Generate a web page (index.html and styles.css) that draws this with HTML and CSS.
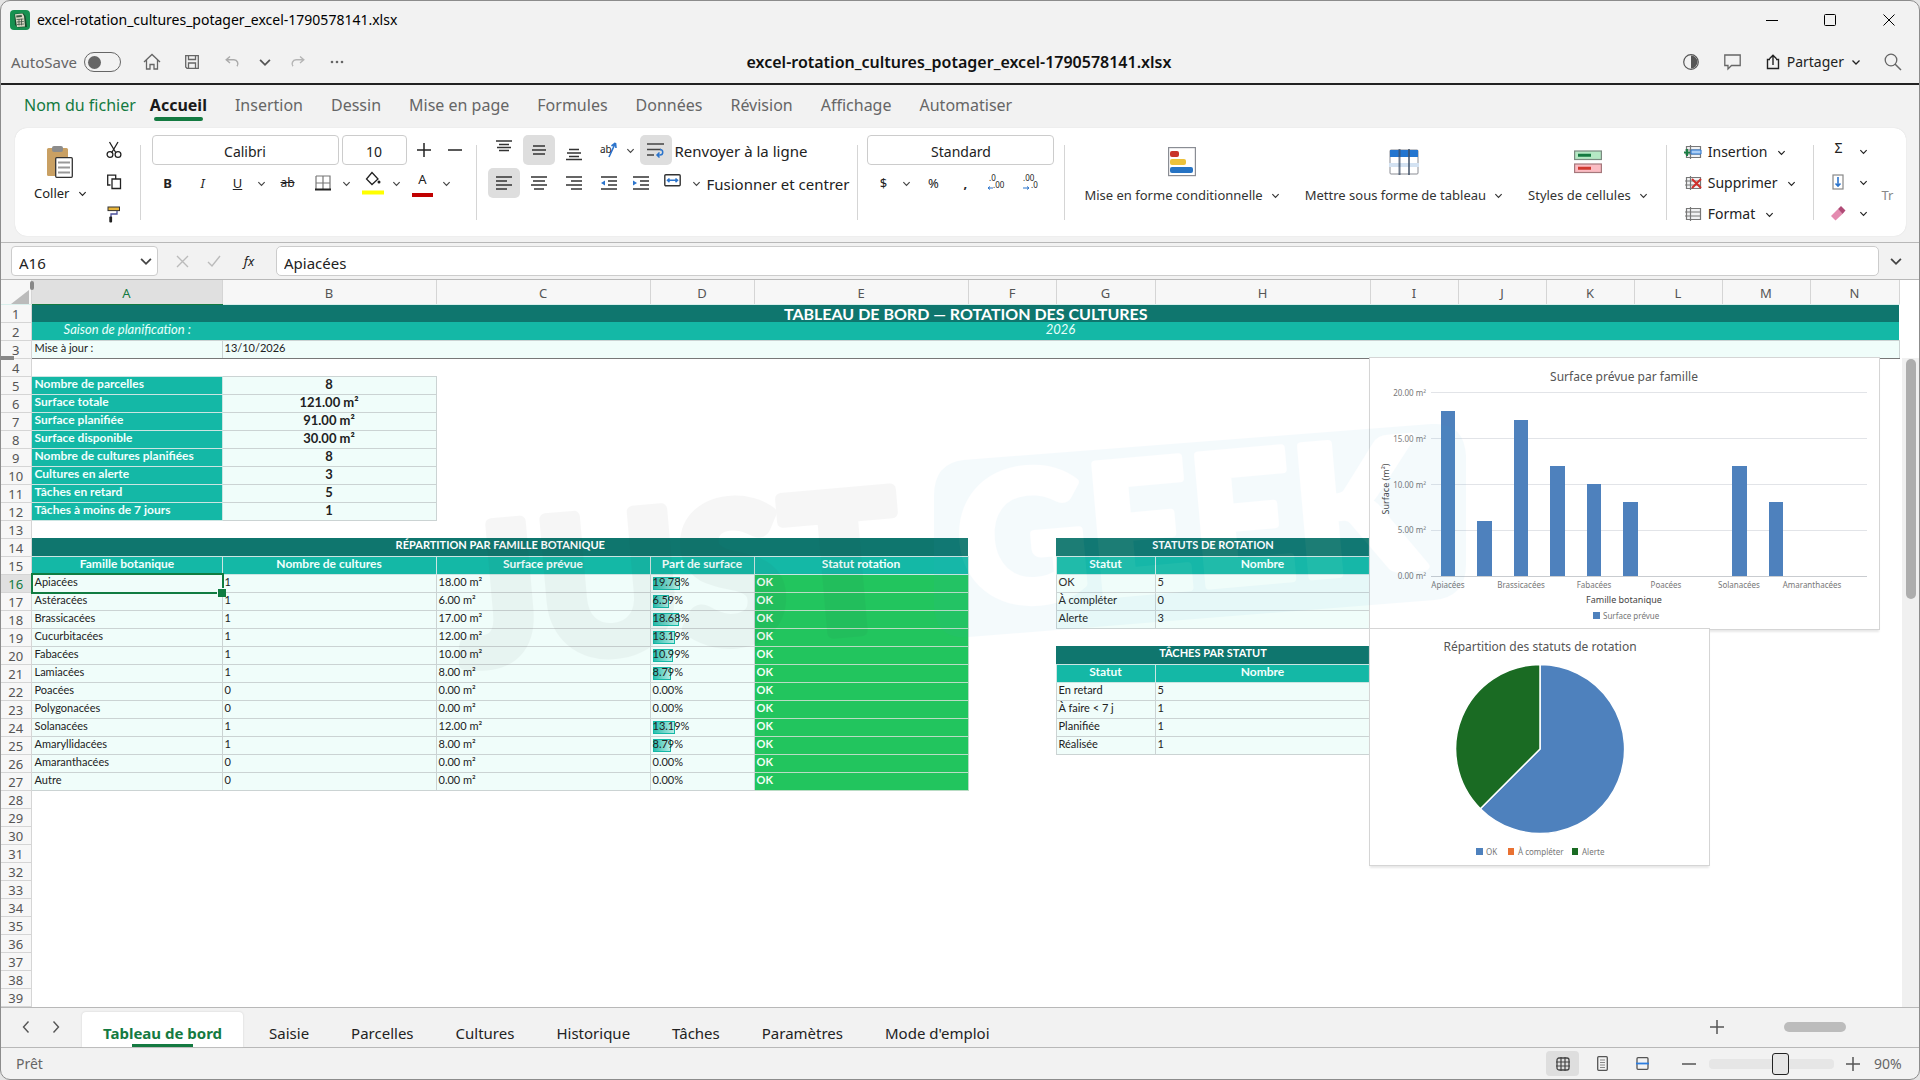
FILE: index.html
```html
<!DOCTYPE html>
<html lang="fr">
<head>
<meta charset="utf-8">
<meta name="viewport" content="width=device-width, initial-scale=1">
<title>excel-rotation_cultures_potager_excel-1790578141.xlsx</title>
<link rel="stylesheet" href="styles.css">
</head>
<body>
<svg class="defs" width="0" height="0" aria-hidden="true">
  <symbol id="chev" viewBox="0 0 10 10"><path d="M1.500 3.500 5 7l3.500-3.500" fill="none" stroke="currentColor" stroke-width="1.300"/></symbol>
  <symbol id="plus" viewBox="0 0 14 14"><path d="M7 0v14M0 7h14" stroke="currentColor" stroke-width="1.500"/></symbol>
  <symbol id="minus" viewBox="0 0 14 14"><path d="M0 7h14" stroke="currentColor" stroke-width="1.500"/></symbol>
  <symbol id="grid-rows" viewBox="0 0 18 14"><path d="M2.500 1.500h14v11h-14zM2.500 5h14M2.500 9h14M6.500 0v14M1 5h3M1 9h3" fill="#f1f2f3" stroke="#777" stroke-width="1.200"/></symbol>
</svg>
<div class="window">
  <header class="titlebar">
    <svg class="logo" viewBox="0 0 20 20"><rect width="20" height="20" rx="4" fill="#179150"/><path d="M4.500 4 13 3l2.500 3L17 17l-9 .5L5 15z" fill="#174c2d"/><path d="M5 4.200 12.500 3.500 14 6l1 10.500-8 .5z" fill="#d9d8c4"/><path d="m6.200 5.500 5.500-.5.200 2-5.500.5z" fill="#3a5a42"/><path d="M6.500 9.500l7-.5M6.800 12l7-.5M7 14.500l7-.5M9 9v6.500M11.500 8.800v6.500" stroke="#3f5545" stroke-width=".8"/></svg>
    <span class="file">excel-rotation_cultures_potager_excel-1790578141.xlsx</span>
    <div class="winctl">
      <button aria-label="Réduire"><svg width="12" height="12" viewBox="0 0 12 12"><path d="M0 6.500h12" stroke="#000"/></svg></button>
      <button aria-label="Agrandir"><svg width="12" height="12" viewBox="0 0 12 12"><rect x=".5" y=".5" width="11" height="11" rx="1" fill="none" stroke="#000"/></svg></button>
      <button aria-label="Fermer"><svg width="12" height="12" viewBox="0 0 12 12"><path d="m.5.5 11 11M11.500.5l-11 11" stroke="#000"/></svg></button>
    </div>
  </header>
  <div class="quickbar">
    <div class="quick">
      <label for="autosave">AutoSave</label><input id="autosave" class="switch" type="checkbox">
      <button class="q1" aria-label="Accueil"><svg width="18" height="18" viewBox="0 0 18 18"><path d="M1 9 9 1.500 17 9M3.500 7v9H7v-4.500h4V16h3.500V7" fill="none" stroke="#666" stroke-width="1.300"/></svg></button>
      <button class="q1" aria-label="Enregistrer"><svg width="14" height="14" viewBox="0 0 14 14"><path d="M.7.7h12.600v12.600H2L.7 12zM3.500.7v3.800h7V.7M3.500 13V8h7v5" fill="none" stroke="#666" stroke-width="1.300"/></svg></button>
      <button class="q1" aria-label="Annuler"><svg width="15" height="14" viewBox="0 0 15 14"><path d="M5 1.500 1.200 4.800 5 8M1.500 4.800H9a4 4 0 0 1 3 6.500" fill="none" stroke="#aaa" stroke-width="1.400"/></svg></button>
      <button class="q2" aria-label="Historique d'annulation"><svg width="14" height="14"><use href="#chev"/></svg></button>
      <button class="q1" aria-label="Rétablir"><svg width="15" height="14" viewBox="0 0 15 14"><path d="M10 1.500 13.800 4.800 10 8M13.500 4.800H6a4 4 0 0 0-3 6.500" fill="none" stroke="#b5b5b5" stroke-width="1.400"/></svg></button>
      <button class="q1" aria-label="Plus"><svg width="14" height="4" viewBox="0 0 14 4"><circle cx="2" cy="2" r="1.300" fill="#666"/><circle cx="7" cy="2" r="1.300" fill="#666"/><circle cx="12" cy="2" r="1.300" fill="#666"/></svg></button>
    </div>
    <strong class="doctitle">excel-rotation_cultures_potager_excel-1790578141.xlsx</strong>
    <div class="share">
      <button class="q1" aria-label="Contraste"><svg width="16" height="16" viewBox="0 0 16 16"><circle cx="8" cy="8" r="7.300" fill="none" stroke="#555" stroke-width="1.200"/><path d="M8 1.500a6.500 6.500 0 0 1 0 13z" fill="#555"/></svg></button>
      <button class="q1" aria-label="Commentaires"><svg width="17" height="16" viewBox="0 0 17 16"><path d="M.8 1h15.400v10.500H7.500L4 15v-3.500H.8z" fill="none" stroke="#666" stroke-width="1.300"/></svg></button>
      <button class="sharebtn"><svg width="14" height="16" viewBox="0 0 14 16"><path d="M4 5.500H1.500v9h11v-9H10M7 11V1.500M3.500 4.800 7 1.300l3.500 3.500" fill="none" stroke="#222" stroke-width="1.400"/></svg>Partager<svg width="10" height="10"><use href="#chev"/></svg></button>
      <button class="q1" aria-label="Rechercher"><svg width="18" height="18" viewBox="0 0 18 18"><circle cx="7" cy="7" r="5.800" fill="none" stroke="#666" stroke-width="1.300"/><path d="m11 11 6 6" stroke="#666" stroke-width="1.500"/></svg></button>
    </div>
  </div>
  <nav class="tabs">
    <a class="filetab" href="#fichier">Nom du fichier</a>
    <a class="active" href="#accueil" aria-current="page">Accueil</a>
    <a href="#insertion">Insertion</a>
    <a href="#dessin">Dessin</a>
    <a href="#mise-en-page">Mise en page</a>
    <a href="#formules">Formules</a>
    <a href="#donnees">Données</a>
    <a href="#revision">Révision</a>
    <a href="#affichage">Affichage</a>
    <a href="#automatiser">Automatiser</a>
  </nav>
  <div class="ribbon">
    <section class="group clip">
      <button class="big paste"><svg width="26" height="32" viewBox="0 0 26 32"><rect y="2" width="21" height="28" rx="1.500" fill="#c9a063"/><rect x="5" width="11" height="6" rx="2" fill="#8c8c8c"/><rect x="8.700" y="11.700" width="16.600" height="19.600" rx="1" fill="#fff" stroke="#333" stroke-width="1.300"/><path d="M11 16.500h12M11 21.500h12M11 26.500h12" stroke="#999" stroke-width="2"/></svg><span>Coller<svg width="9" height="9"><use href="#chev"/></svg></span></button>
      <div class="stack">
        <button aria-label="Couper"><svg width="16" height="18" viewBox="0 0 16 18"><path d="M3.500 1 10 12M12 1 5.500 12" stroke="#222" stroke-width="1.300"/><circle cx="4" cy="13.500" r="2.900" fill="none" stroke="#222" stroke-width="1.300"/><circle cx="12" cy="13.500" r="2.900" fill="none" stroke="#222" stroke-width="1.300"/></svg></button>
        <button aria-label="Copier"><svg width="16" height="16" viewBox="0 0 16 16"><path d="M4.500 11H1.700V1.200h8v3M6 5h8.500v9.500H6z" fill="none" stroke="#222" stroke-width="1.300"/></svg></button>
        <button aria-label="Reproduire la mise en forme"><svg width="14" height="17" viewBox="0 0 14 17"><rect x="1" y="1" width="11.500" height="3.600" fill="#e8b53a" stroke="#333" stroke-width="1"/><path d="M10 5v3H4v4" fill="none" stroke="#4a4f9a" stroke-width="1.300"/><rect x="2.300" y="10.500" width="2.800" height="6" rx="1" fill="#222"/></svg></button>
      </div>
    </section>
    <section class="group font">
      <div class="line"><input class="box wide" aria-label="Police" value="Calibri"><input class="box size" aria-label="Taille" value="10"><button class="t pm" aria-label="Agrandir la police"><svg width="14" height="14"><use href="#plus"/></svg></button><button class="t pm" aria-label="Réduire la police"><svg width="14" height="14"><use href="#minus"/></svg></button></div>
      <div class="line">
        <button class="t"><b>B</b></button>
        <button class="t"><i>I</i></button>
        <span class="pair"><button class="t"><u>U</u></button><button class="c" aria-label="Options de soulignement"><svg width="9" height="9"><use href="#chev"/></svg></button></span>
        <button class="t"><s>ab</s></button>
        <span class="pair"><button class="t" aria-label="Bordures"><svg width="16" height="16" viewBox="0 0 16 16"><path d="M1 1h14v14M1 1v14M8 1v14M1 8h14" fill="none" stroke="#777" stroke-width="1.200"/><path d="M0 14.500h16" stroke="#222" stroke-width="2"/></svg></button><button class="c" aria-label="Options de bordures"><svg width="9" height="9"><use href="#chev"/></svg></button></span>
        <span class="pair"><button class="t" aria-label="Remplissage"><svg width="22" height="24" viewBox="0 0 22 24"><path d="M10 1.500 4.500 8 10 13.500 16 8z" fill="none" stroke="#222" stroke-width="1.300"/><circle cx="17" cy="11" r="1.500" fill="#222"/><path d="M0 21.500h22" stroke="#ff0" stroke-width="4"/></svg></button><button class="c" aria-label="Couleurs de remplissage"><svg width="9" height="9"><use href="#chev"/></svg></button></span>
        <span class="pair"><button class="t fontcolor">A</button><button class="c" aria-label="Couleurs de police"><svg width="9" height="9"><use href="#chev"/></svg></button></span>
      </div>
    </section>
    <section class="group align">
      <div class="line">
        <button class="t" aria-label="Aligner en haut"><svg width="16" height="24" viewBox="0 0 16 24"><path d="M0 3h16M3 6.500h10M1 9.500h14M3 12.500h10" stroke="#333" stroke-width="1.300"/></svg></button>
        <button class="t on" aria-label="Aligner au centre"><svg width="16" height="16" viewBox="0 0 16 16"><path d="M2 4h12M1 8h14M2 12h12" stroke="#333" stroke-width="1.600"/></svg></button>
        <button class="t" aria-label="Aligner en bas"><svg width="16" height="24" viewBox="0 0 16 24"><path d="M3 11.500h10M1 15h14M3 18.500h10M0 21.500h16" stroke="#333" stroke-width="1.300"/></svg></button>
        <span class="pair"><button class="t" aria-label="Orientation"><svg width="18" height="18" viewBox="0 0 18 18"><path d="m9 16 6-13M15.500 2l-4 3M15.500 2l.5 5" stroke="#2b74cc" stroke-width="1.600"/><text x="0" y="12" font-size="10" fill="#222">ab</text></svg></button><button class="c slim" aria-label="Options d'orientation"><svg width="9" height="9"><use href="#chev"/></svg></button></span>
        <button class="t on" aria-label="Renvoyer à la ligne"><svg width="18" height="16" viewBox="0 0 18 16"><path d="M0 2h17M0 7.500h14M0 13h7" stroke="#444" stroke-width="1.600"/><path d="M13 7.500a2.700 2.700 0 0 1 0 5.500h-3m2.500-2.500L10 13l2.500 2.500" fill="none" stroke="#2b74cc" stroke-width="1.500"/></svg></button>
        <span class="txt">Renvoyer à la ligne</span>
      </div>
      <div class="line">
        <button class="t on" aria-label="Aligner à gauche"><svg width="16" height="14" viewBox="0 0 16 14"><path d="M0 1h16M0 5h11M0 9h16M0 13h11" stroke="#333" stroke-width="1.500"/></svg></button>
        <button class="t" aria-label="Centrer"><svg width="16" height="14" viewBox="0 0 16 14"><path d="M0 1h16M2 5h12M0 9h16M3 13h10" stroke="#333" stroke-width="1.500"/></svg></button>
        <button class="t" aria-label="Aligner à droite"><svg width="16" height="14" viewBox="0 0 16 14"><path d="M0 1h16M5 5h11M0 9h16M5 13h11" stroke="#333" stroke-width="1.500"/></svg></button>
        <span class="pair"><button class="t" aria-label="Diminuer le retrait"><svg width="16" height="14" viewBox="0 0 16 14"><path d="M0 1h16M7 5h9M7 9h9M0 13h16" stroke="#333" stroke-width="1.500"/><path d="M0 7l4-2.500v5z" fill="#2b74cc"/></svg></button><button class="t" aria-label="Augmenter le retrait"><svg width="16" height="14" viewBox="0 0 16 14"><path d="M0 1h16M7 5h9M7 9h9M0 13h16" stroke="#333" stroke-width="1.500"/><path d="M4 7 0 4.500v5z" fill="#2b74cc"/></svg></button><button class="t" aria-label="Fusionner et centrer"><svg width="18" height="18" viewBox="0 0 18 18"><rect x=".8" y=".8" width="15.400" height="11" rx="1" fill="none" stroke="#333" stroke-width="1.400"/><path d="M3.500 6.300h10M5.500 4.500l-2 1.800 2 1.800M11.500 4.500l2 1.800-2 1.800" fill="none" stroke="#2b74cc" stroke-width="1.500"/></svg></button><button class="c" aria-label="Options de fusion"><svg width="9" height="9"><use href="#chev"/></svg></button></span>
        <span class="txt">Fusionner et centrer</span>
      </div>
    </section>
    <section class="group num">
      <div class="line"><input class="box wide" aria-label="Format de nombre" value="Standard"></div>
      <div class="line">
        <span class="pair"><button class="t">$</button><button class="c" aria-label="Devises"><svg width="9" height="9"><use href="#chev"/></svg></button></span>
        <span class="pair"><button class="t">%</button><button class="t"><b>,</b></button><button class="t" aria-label="Ajouter une décimale"><svg width="20" height="20" viewBox="0 0 20 20"><text x="2" y="8" font-size="8" fill="#222">.0</text><text x="6" y="15" font-size="8" fill="#222">.00</text><path d="M6 15H1m2-1.500L1 15l2 1.500" fill="none" stroke="#2b74cc"/></svg></button></span>
        <button class="t" aria-label="Réduire les décimales"><svg width="20" height="20" viewBox="0 0 20 20"><text x="1" y="8" font-size="8" fill="#222">.00</text><text x="9" y="15" font-size="8" fill="#222">.0</text><path d="M1 15h6m-2-1.500L7 15l-2 1.500" fill="none" stroke="#2b74cc"/></svg></button>
      </div>
    </section>
    <section class="group styles">
      <button class="big"><svg width="28" height="30" viewBox="0 0 28 30"><rect x=".6" y=".6" width="26.800" height="28" fill="#fff" stroke="#8a8d94" stroke-width="1.200"/><rect x="2" y="4" width="9" height="6" rx="2" fill="#c9342b"/><rect x="2" y="12" width="16" height="6" rx="2" fill="#ecc13b"/><rect x="2" y="20" width="23" height="6" rx="2" fill="#2673c4"/></svg><span>Mise en forme conditionnelle<svg width="9" height="9"><use href="#chev"/></svg></span></button>
      <button class="big"><svg width="30" height="30" viewBox="0 0 30 30"><rect x="1" y="3" width="28" height="24" rx="1" fill="#fff" stroke="#8a8d94"/><rect x="1" y="3" width="28" height="7" fill="#2375cf"/><rect x="0" y="16" width="30" height="4" fill="#d3e2f2"/><path d="M10.500 2v26M20 2v26" stroke="#3d4f66" stroke-opacity=".75" stroke-width="2"/></svg><span>Mettre sous forme de tableau<svg width="9" height="9"><use href="#chev"/></svg></span></button>
      <button class="big"><svg width="28" height="30" viewBox="0 0 28 30"><rect x=".6" y="4" width="26.800" height="8.500" fill="#b5e8c4" stroke="#7a8a80" stroke-width="1.200"/><path d="M4 8.300h13" stroke="#147a41" stroke-width="3"/><rect x=".6" y="17" width="26.800" height="8.500" fill="#fbbcc3" stroke="#a5787c" stroke-width="1.200"/><path d="M4 21.300h13" stroke="#d0392f" stroke-width="3"/></svg><span>Styles de cellules<svg width="9" height="9"><use href="#chev"/></svg></span></button>
    </section>
    <section class="group cells">
      <button><svg width="18" height="14"><use href="#grid-rows"/><path d="M7 5h10v4H7z" fill="#a9cdf5" stroke="#2b74cc"/><path d="M3 4v7M0 7.500h6" stroke="#1b7d45" stroke-width="2"/></svg>Insertion<svg width="9" height="9"><use href="#chev"/></svg></button>
      <button><svg width="18" height="14"><use href="#grid-rows"/><path d="m8 3 9 9M17 3l-9 9" stroke="#d0302b" stroke-width="2"/></svg>Supprimer<svg width="9" height="9"><use href="#chev"/></svg></button>
      <button><svg width="18" height="14"><use href="#grid-rows"/></svg>Format<svg width="9" height="9"><use href="#chev"/></svg></button>
    </section>
    <section class="group edit">
      <button aria-label="Somme automatique"><span class="sigma">Σ</span><svg width="9" height="9"><use href="#chev"/></svg></button>
      <button aria-label="Remplissage"><svg width="12" height="16" viewBox="0 0 12 16"><rect x="1" y="1" width="10" height="14" fill="none" stroke="#888" stroke-width="1.200"/><path d="M6 3v9M3.500 9.500 6 12l2.500-2.500" fill="none" stroke="#2b74cc" stroke-width="1.600"/></svg><svg width="9" height="9"><use href="#chev"/></svg></button>
      <button aria-label="Effacer"><svg width="16" height="16" viewBox="0 0 16 16"><path d="m1 11 7-7 4.500 5-7 6.500z" fill="#e48bb0"/><path d="m8 4 3-3 4.500 4.500-3 3.500z" fill="#b04a76"/></svg><svg width="9" height="9"><use href="#chev"/></svg></button>
    </section>
    <button class="more">Tr</button>
  </div>
  <div class="formula">
    <div class="namebox"><input aria-label="Zone Nom" value="A16"><button aria-label="Liste des noms"><svg width="14" height="14"><use href="#chev"/></svg></button></div>
    <button class="fbtn" aria-label="Annuler la saisie"><svg width="13" height="13" viewBox="0 0 13 13"><path d="m1 1 11 11M12 1 1 12" stroke="#bbb" stroke-width="1.400"/></svg></button>
    <button class="fbtn" aria-label="Valider"><svg width="14" height="12" viewBox="0 0 14 12"><path d="m1 7 4 4 8-10" fill="none" stroke="#bbb" stroke-width="1.400"/></svg></button>
    <button class="fbtn fx"><i>fx</i></button>
    <input class="fx-input" aria-label="Barre de formule" value="Apiacées">
    <button class="expand" aria-label="Développer"><svg width="14" height="14"><use href="#chev"/></svg></button>
  </div>
  <main class="sheet">
    <table class="grid">
      <colgroup><col class="w-h"><col class="w-a"><col class="w-b"><col class="w-b"><col class="w-d"><col class="w-b"><col class="w-i"><col class="w-g"><col class="w-k"><col class="w-i"><col class="w-i"><col class="w-i"><col class="w-i"><col class="w-i"><col class="w-n"></colgroup>
      <thead><tr><th class="corner"><svg width="18" height="15" viewBox="0 0 18 15"><path d="M0 15 18 1v14z" fill="#bbb"/></svg></th><th class="cur">A</th><th>B</th><th>C</th><th>D</th><th>E</th><th>F</th><th>G</th><th>H</th><th>I</th><th>J</th><th>K</th><th>L</th><th>M</th><th>N</th></tr></thead>
      <tbody>
        <tr><th>1</th><td class="dk main" colspan="14">TABLEAU DE BORD — ROTATION DES CULTURES</td></tr>
        <tr><th>2</th><td class="season">Saison de planification :</td><td class="season" colspan="13">2026</td></tr>
        <tr class="frozen"><th>3</th><td class="v">Mise à jour :</td><td class="v" colspan="13">13/10/2026</td></tr>
        <tr><th>4</th><td colspan="14"></td></tr>
        <tr><th>5</th><td class="k">Nombre de parcelles</td><td class="n">8</td><td colspan="12"></td></tr>
        <tr><th>6</th><td class="k">Surface totale</td><td class="n">121.00 m²</td><td colspan="12"></td></tr>
        <tr><th>7</th><td class="k">Surface planifiée</td><td class="n">91.00 m²</td><td colspan="12"></td></tr>
        <tr><th>8</th><td class="k">Surface disponible</td><td class="n">30.00 m²</td><td colspan="12"></td></tr>
        <tr><th>9</th><td class="k">Nombre de cultures planifiées</td><td class="n">8</td><td colspan="12"></td></tr>
        <tr><th>10</th><td class="k">Cultures en alerte</td><td class="n">3</td><td colspan="12"></td></tr>
        <tr><th>11</th><td class="k">Tâches en retard</td><td class="n">5</td><td colspan="12"></td></tr>
        <tr><th>12</th><td class="k">Tâches à moins de 7 jours</td><td class="n">1</td><td colspan="12"></td></tr>
        <tr><th>13</th><td colspan="14"></td></tr>
        <tr><th>14</th><td class="dk" colspan="5">RÉPARTITION PAR FAMILLE BOTANIQUE</td><td></td><td class="dk" colspan="2">STATUTS DE ROTATION</td><td colspan="6"></td></tr>
        <tr><th>15</th><td class="k mid">Famille botanique</td><td class="k mid">Nombre de cultures</td><td class="k mid">Surface prévue</td><td class="k mid">Part de surface</td><td class="k mid">Statut rotation</td><td></td><td class="k mid">Statut</td><td class="k mid">Nombre</td><td colspan="6"></td></tr>
        <tr><th class="cur">16</th><td class="v sel">Apiacées</td><td class="v">1</td><td class="v">18.00 m²</td><td class="v bar"><span class="fill" style="width:27px"></span><span>19.78%</span></td><td class="ok">OK</td><td></td><td class="v">OK</td><td class="v">5</td><td colspan="6"></td></tr>
        <tr><th>17</th><td class="v">Astéracées</td><td class="v">1</td><td class="v">6.00 m²</td><td class="v bar"><span class="fill" style="width:16px"></span><span>6.59%</span></td><td class="ok">OK</td><td></td><td class="v">À compléter</td><td class="v">0</td><td colspan="6"></td></tr>
        <tr><th>18</th><td class="v">Brassicacées</td><td class="v">1</td><td class="v">17.00 m²</td><td class="v bar"><span class="fill" style="width:26px"></span><span>18.68%</span></td><td class="ok">OK</td><td></td><td class="v">Alerte</td><td class="v">3</td><td colspan="6"></td></tr>
        <tr><th>19</th><td class="v">Cucurbitacées</td><td class="v">1</td><td class="v">12.00 m²</td><td class="v bar"><span class="fill" style="width:22px"></span><span>13.19%</span></td><td class="ok">OK</td><td colspan="9"></td></tr>
        <tr><th>20</th><td class="v">Fabacées</td><td class="v">1</td><td class="v">10.00 m²</td><td class="v bar"><span class="fill" style="width:20px"></span><span>10.99%</span></td><td class="ok">OK</td><td></td><td class="dk" colspan="2">TÂCHES PAR STATUT</td><td colspan="6"></td></tr>
        <tr><th>21</th><td class="v">Lamiacées</td><td class="v">1</td><td class="v">8.00 m²</td><td class="v bar"><span class="fill" style="width:18px"></span><span>8.79%</span></td><td class="ok">OK</td><td></td><td class="k mid">Statut</td><td class="k mid">Nombre</td><td colspan="6"></td></tr>
        <tr><th>22</th><td class="v">Poacées</td><td class="v">0</td><td class="v">0.00 m²</td><td class="v">0.00%</td><td class="ok">OK</td><td></td><td class="v">En retard</td><td class="v">5</td><td colspan="6"></td></tr>
        <tr><th>23</th><td class="v">Polygonacées</td><td class="v">0</td><td class="v">0.00 m²</td><td class="v">0.00%</td><td class="ok">OK</td><td></td><td class="v">À faire &lt; 7 j</td><td class="v">1</td><td colspan="6"></td></tr>
        <tr><th>24</th><td class="v">Solanacées</td><td class="v">1</td><td class="v">12.00 m²</td><td class="v bar"><span class="fill" style="width:22px"></span><span>13.19%</span></td><td class="ok">OK</td><td></td><td class="v">Planifiée</td><td class="v">1</td><td colspan="6"></td></tr>
        <tr><th>25</th><td class="v">Amaryllidacées</td><td class="v">1</td><td class="v">8.00 m²</td><td class="v bar"><span class="fill" style="width:18px"></span><span>8.79%</span></td><td class="ok">OK</td><td></td><td class="v">Réalisée</td><td class="v">1</td><td colspan="6"></td></tr>
        <tr><th>26</th><td class="v">Amaranthacées</td><td class="v">0</td><td class="v">0.00 m²</td><td class="v">0.00%</td><td class="ok">OK</td><td colspan="9"></td></tr>
        <tr><th>27</th><td class="v">Autre</td><td class="v">0</td><td class="v">0.00 m²</td><td class="v">0.00%</td><td class="ok">OK</td><td colspan="9"></td></tr>
        <tr><th>28</th><td colspan="14"></td></tr>
        <tr><th>29</th><td colspan="14"></td></tr>
        <tr><th>30</th><td colspan="14"></td></tr>
        <tr><th>31</th><td colspan="14"></td></tr>
        <tr><th>32</th><td colspan="14"></td></tr>
        <tr><th>33</th><td colspan="14"></td></tr>
        <tr><th>34</th><td colspan="14"></td></tr>
        <tr><th>35</th><td colspan="14"></td></tr>
        <tr><th>36</th><td colspan="14"></td></tr>
        <tr><th>37</th><td colspan="14"></td></tr>
        <tr><th>38</th><td colspan="14"></td></tr>
        <tr><th>39</th><td colspan="14"></td></tr>
      </tbody>
    </table>
    <span class="pane-v"></span><span class="pane-h"></span>
    <svg class="chart bars" width="509" height="271" viewBox="0 0 509 271" role="img" aria-label="Surface prévue par famille">
      <text class="ct" x="254" y="23">Surface prévue par famille</text>
      <path d="M61 34.500h436M61 80.500h436M61 126.500h436M61 172.500h436" stroke="#e2e4e8"/>
      <g fill="#4e81bd"><path d="M71 53h14v165H71zM107 163h15v55h-15zM144 62h14v156h-14zM180 108h15v110h-15zM217 126h14v92h-14zM253 144h15v74h-15zM362 108h15v110h-15zM399 144h14v74h-14z"/><path d="M223 254h7v7h-7z"/></g>
      <path d="M61 218.500h436" stroke="#c9ccd0"/>
      <g class="cs end"><text x="56" y="38">20.00 m²</text><text x="56" y="84">15.00 m²</text><text x="56" y="130">10.00 m²</text><text x="56" y="175">5.00 m²</text><text x="56" y="221">0.00 m²</text></g>
      <g class="cs"><text x="78" y="230">Apiacées</text><text x="151" y="230">Brassicacées</text><text x="224" y="230">Fabacées</text><text x="296" y="230">Poacées</text><text x="369" y="230">Solanacées</text><text x="442" y="230">Amaranthacées</text></g>
      <g class="cs start"><text x="233" y="261">Surface prévue</text></g>
      <text class="ca" x="254" y="245">Famille botanique</text>
      <text class="ca" transform="translate(19 131) rotate(-90)">Surface (m²)</text>
    </svg>
    <svg class="chart pie" width="339" height="236" viewBox="0 0 339 236" role="img" aria-label="Répartition des statuts de rotation">
      <text class="ct" x="170" y="22">Répartition des statuts de rotation</text>
      <g stroke="#fff" stroke-width="1.500"><path d="M170 120V35.500a84.500 84.500 0 1 1-59.700 144.200z" fill="#4e81bd"/><path d="M170 120l-59.700 59.700A84.500 84.500 0 0 1 170 35.500z" fill="#1a6b23"/></g>
      <path d="M106 219h7v7h-7z" fill="#4e81bd"/><path d="M138 219h6v7h-6z" fill="#e97132"/><path d="M202 219h6v7h-6z" fill="#1a6b23"/>
      <g class="cs start"><text x="116" y="226">OK</text><text x="148" y="226">À compléter</text><text x="212" y="226">Alerte</text></g>
    </svg>
    <svg class="watermark" width="1030" height="280" viewBox="0 0 1030 280" aria-hidden="true">
      <g opacity=".04"><text transform="translate(14 260) rotate(-5)" font-size="190" fill="#333" stroke="#333" stroke-width="12">JUST</text></g>
      <g opacity=".05"><path d="M515 55q-30 3-30 36v110q2 34 34 31l466-37q32-3 32-36V51q-2-34-34-32z" fill="#3aa6d8"/><text transform="translate(514 202) rotate(-5)" font-size="180" fill="#fff" stroke="#fff" stroke-width="8">GEEK</text></g>
    </svg>
    <div class="vscroll"><span></span></div>
  </main>
  <nav class="sheets">
    <button class="arrow" aria-label="Feuille précédente"><svg width="8" height="14" viewBox="0 0 8 14"><path d="M6.500 1.500 1.500 7l5 5.500" fill="none" stroke="#555" stroke-width="1.400"/></svg></button>
    <button class="arrow" aria-label="Feuille suivante"><svg width="8" height="14" viewBox="0 0 8 14"><path d="m1.500 1.500 5 5.500-5 5.500" fill="none" stroke="#555" stroke-width="1.400"/></svg></button>
    <a class="active" href="#s1" aria-current="page">Tableau de bord</a>
    <a href="#s2">Saisie</a><a href="#s3">Parcelles</a><a href="#s4">Cultures</a><a href="#s5">Historique</a><a href="#s6">Tâches</a><a href="#s7">Paramètres</a><a href="#s8">Mode d'emploi</a>
    <button class="add" aria-label="Nouvelle feuille"><svg width="14" height="14"><use href="#plus"/></svg></button>
    <span class="hscroll"></span>
  </nav>
  <footer class="status">
    <span>Prêt</span>
    <button class="view on" aria-label="Normal"><svg width="14" height="14" viewBox="0 0 14 14"><rect x="1" y="1" width="12" height="12" rx="2" fill="none" stroke="#444" stroke-width="1.300"/><path d="M5 0v14M9 0v14M0 5h14M0 9h14" stroke="#444" stroke-width="1.200"/></svg></button>
    <button class="view" aria-label="Mise en page"><svg width="11" height="15" viewBox="0 0 11 15"><rect x=".7" y=".7" width="9.600" height="13.600" rx="1" fill="none" stroke="#555" stroke-width="1.300"/><path d="M3 4h5M3 6.500h5M3 9h5M3 11.500h5" stroke="#888"/></svg></button>
    <button class="view" aria-label="Sauts de page"><svg width="13" height="13" viewBox="0 0 13 13"><rect x="1" y=".7" width="11" height="11.600" rx="1" fill="none" stroke="#555" stroke-width="1.300"/><path d="M0 6.500h13" stroke="#2b7de0" stroke-width="1.800"/></svg></button>
    <button class="zoom out" aria-label="Zoom arrière"><svg width="14" height="14"><use href="#minus"/></svg></button>
    <input class="slider" type="range" min="0" max="100" value="58" aria-label="Zoom">
    <button class="zoom" aria-label="Zoom avant"><svg width="14" height="14"><use href="#plus"/></svg></button>
    <span class="pct">90%</span>
  </footer>
</div>
</body>
</html>
```
FILE: styles.css
```css
* { box-sizing: border-box; }
body { margin: 0; background: #e4e4e4; font: 14px/20px "Noto Sans", "Open Sans", sans-serif; color: #222; }
button { padding: 0; border: 0; background: none; color: inherit; font: inherit; display: flex; align-items: center; justify-content: center; flex: none; }
input { font: inherit; color: inherit; margin: 0; min-width: 0; }
a { color: inherit; text-decoration: none; }
svg { display: block; flex: none; overflow: visible; }
.defs { position: absolute; }
.window { height: 100vh; min-width: 0; display: flex; flex-direction: column; border: 1px solid #8c8c8c; border-radius: 10px; background: #f2f2f2; overflow: hidden; }

.titlebar { display: flex; align-items: center; height: 37px; padding: 0 13px 0 9px; flex: none; }
.logo { width: 20px; height: 20px; margin-right: 7px; }
.file { color: #000; }
.winctl { display: flex; margin-left: auto; }
.winctl button { width: 58px; height: 36px; }
.winctl button:last-child { width: 59px; margin-right: -12px; }

.quickbar { display: grid; grid-template-columns: 1fr auto 1fr; align-items: center; height: 47px; padding: 2px 12px 0 10px; border-bottom: 2px solid #222; flex: none; }
.quick, .share { display: flex; align-items: center; }
.quick label { font-size: 15px; color: #666; }
.switch { appearance: none; width: 37px; height: 20px; margin: 0 11px 0 7px; border: 1px solid #666; border-radius: 10px; padding: 2px; }
.switch::before { content: ""; display: block; width: 13px; height: 13px; margin: 1px; border-radius: 50%; background: #666; }
.q1 { width: 40px; height: 30px; color: #555; }
.q2 { width: 25px; height: 30px; color: #555; }
.doctitle { font-size: 16px; font-weight: 600; color: #111; }
.share { justify-content: flex-end; }
.share .q1 { width: 42px; }
.sharebtn { gap: 7px; padding: 0 18px 0 12px; }
.share .q1:last-child { width: 28px; }

.tabs { display: flex; gap: 28px; height: 43px; padding: 0 23px; font-size: 16px; color: #666; flex: none; line-height: 40px; }
.tabs .filetab { color: #147a41; margin-right: -14px; }
.tabs .active { position: relative; font-weight: 700; color: #1a1a1a; }
.tabs .active::after { content: ""; position: absolute; left: 4px; right: 4px; top: 32px; height: 4px; border-radius: 2px; background: #147a41; }

.ribbon { display: flex; align-items: stretch; margin: 0 13px 6px 14px; height: 108px; padding: 7px 12px 0; border-radius: 12px; background: #fff; flex: none; box-shadow: 0 0 1px #ccc; }
.group { display: flex; flex-direction: column; gap: 3px; padding: 0 9px 0 11px; position: relative; flex: none; }
.group::after { content: ""; position: absolute; right: 0; top: 10px; height: 75px; width: 1px; background: #d5d5d5; }
.line, .pair { display: flex; align-items: center; height: 30px; }
.line { gap: 3px; }
.clip { flex-direction: row; gap: 15px; padding: 0 15px 0 7px; }
.font { padding-right: 8px; }
.big { flex-direction: column; gap: 5px; align-self: flex-start; font-size: 13px; padding-top: 12px; }
.big span { display: flex; align-items: center; gap: 8px; }
.paste { padding-top: 11px; }
.stack { display: flex; flex-direction: column; gap: 8px; }
.stack button { width: 20px; height: 24px; margin: 0 2px; }
.stack button:first-child { margin-top: 3px; }
.box { height: 30px; border: 1px solid #ccc; border-radius: 4px; text-align: center; background: #fff; padding: 2px 0 0; }
.wide { width: 187px; }
.size { width: 65px; }
.t { width: 32px; height: 30px; border-radius: 5px; font-size: 13px; }
.pm { width: 28px; }
.c { width: 15px; height: 30px; color: #444; }
.slim { width: 12px; }
.on { background: #dedede; }
.t s { font-size: 12px; }
.t text { font-family: "Noto Sans", sans-serif; }
.txt { font-size: 15px; padding-top: 2px; }
.fontcolor { line-height: 16px; padding-bottom: 8px; }
.fontcolor::before { content: ""; position: absolute; width: 21px; height: 4px; margin-top: 32px; background: #c00000; }
.num { padding: 0 11px 0 9px; }
.styles { flex-direction: row; gap: 25px; padding: 0 19px 0 19px; color: #333; }
.styles .big { gap: 8px; }
.cells { gap: 7px; padding: 5px 18px 0 17px; min-width: 146px; }
.cells button { gap: 6px; height: 24px; justify-content: flex-start; }
.cells button svg:last-child { margin-left: 4px; }
.edit { gap: 7px; padding: 4px 10px 0 16px; }
.edit::after { display: none; }
.edit button { height: 24px; width: 38px; justify-content: space-between; }
.sigma { padding: 0 0 6px 4px; line-height: 16px; }
.edit button svg:first-child { min-width: 16px; }
.more { align-self: flex-start; margin: 50px 0 0 3px; font-size: 13px; color: #888; }

.formula { display: flex; align-items: center; height: 38px; padding: 0 7px 0 10px; border: solid #b8b8b8; border-width: 1px 0; flex: none; font-size: 15px; }
.namebox { display: flex; width: 147px; height: 30px; border: 1px solid #ccc; border-radius: 4px; background: #fff; margin-right: 8px; }
.namebox input { flex: 1; width: 0; border: 0; background: none; padding: 3px 7px 0; }
.namebox button { width: 22px; color: #444; }
.fbtn { width: 32px; height: 30px; }
.fx { width: 38px; font-size: 13px; margin-right: 8px; }
.fx-input { flex: 1; height: 30px; border: 1px solid #ccc; border-radius: 5px; padding: 3px 7px 0; background: #fff; }
.expand { width: 33px; color: #444; }

.sheet { position: relative; flex: 1; min-height: 0; overflow: hidden; background: #fff; }
.grid { table-layout: fixed; width: 1898px; border-collapse: collapse; font: 11px/14px Lato, "Noto Sans", sans-serif; color: #222; }
.w-h { width: 30px; } .w-a { width: 191px; } .w-b { width: 214px; } .w-d { width: 104px; } .w-i { width: 88px; } .w-g { width: 99px; } .w-k { width: 215px; } .w-n { width: 89px; }
.grid th { padding: 0; font: 13px/16px "Noto Sans", sans-serif; color: #555; background: #f7f7f7; border: 1px solid #d5d5d5; }
.grid tr { height: 18px; }
.grid thead tr { height: 24px; }
.grid thead th { border-top: 0; border-bottom-color: #d9efec; vertical-align: bottom; padding-bottom: 3px; }
.grid thead .cur { background: #e0e0e0; color: #147a41; border-bottom: 1px solid #147a41; }
.grid tbody th { border-left: 0; padding-top: 1px; }
.grid tbody .cur { background: #e0e0e0; color: #147a41; border-right: 1px solid #147a41; }
.grid .corner { border-left: 0; padding: 0 0 0 10px; }
.grid td { padding: 0 2px; height: 18px; vertical-align: top; white-space: nowrap; overflow: hidden; }
.grid td:nth-child(2) { padding-left: 3px; }
.grid .dk { background: #0f766e; color: #fff; font-weight: 700; text-align: center; }
.grid .main { font-size: 16px; line-height: 17px; }
.grid .season { background: #14b8a6; color: #eafffb; font-size: 13px; font-style: italic; text-align: center; }
.grid .v { background: #f0fdfa; border: 1px solid #cbd3d3; }
.grid .frozen td { border-bottom-color: #777; }
.grid .k { background: #14b8a6; color: #f2fffd; border: 1px solid #cbe5e2; font-size: 12px; font-weight: 700; }
.grid .mid { text-align: center; }
.grid .n { background: #f0fdfa; border: 1px solid #cbd3d3; font-size: 13px; font-weight: 700; text-align: center; }
.grid .ok { background: #22c55e; color: #f2fff6; border: 1px solid #b9dcc4; font-weight: 700; }
.grid .bar { position: relative; }
.bar span { position: relative; }
.bar .fill { position: absolute; left: 2px; top: 2px; height: 13px; border: 1px solid #14b8a6; background: linear-gradient(90deg, #2bbfae, #b4ebe3); }
.grid .sel { position: relative; overflow: visible; }
.sel::before { content: ""; position: absolute; inset: -2px -2px -2px -1px; border: 2px solid #107c41; }
.sel::after { content: ""; position: absolute; right: -4px; bottom: -5px; width: 8px; height: 8px; background: #107c41; border: solid #f0fdfa; border-width: 1px 0 0 1px; }
.pane-v { position: absolute; left: 29px; top: 1px; width: 4px; height: 9px; border-radius: 2px; background: #888; }
.pane-h { position: absolute; left: 0; top: 76px; width: 13px; height: 4px; background: #888; }
.chart { position: absolute; left: 1369px; background: #fff; box-shadow: 0 0 0 1px #d5d5d5, 0 3px 2px #e8e8e8; font-family: "Noto Sans", sans-serif; }
.bars { top: 78px; }
.pie { top: 349px; }
.ct { font-size: 12px; fill: #555; text-anchor: middle; }
.ca { font-size: 9px; fill: #444; text-anchor: middle; }
.cs { font-size: 8px; fill: #777; text-anchor: middle; }
.end { text-anchor: end; }
.start { text-anchor: start; }
.watermark { position: absolute; left: 448px; top: 125px; pointer-events: none; font-family: Lato, sans-serif; font-weight: 900; stroke-linejoin: round; }
.vscroll { position: absolute; right: 0; top: 78px; bottom: 0; width: 17px; padding: 1px 4px 0; background: #f0f0f0; }
.vscroll span { display: block; width: 10px; height: 240px; border-radius: 5px; background: #adadad; }

.sheets { display: flex; align-items: stretch; height: 41px; padding: 4px 73px 0 10px; border: solid #b8b8b8; border-width: 1px 0; font-size: 15px; line-height: 43px; flex: none; }
.arrow { width: 30px; height: 30px; }
.sheets a { padding: 0 21px; }
.sheets .arrow + a { margin: 0 5px 0 11px; }
.sheets .active { position: relative; background: #fff; color: #147a41; font-weight: 700; border-radius: 4px 4px 0 0; box-shadow: 0 0 2px #ccc; }
.sheets .active::after { content: ""; position: absolute; left: 50px; right: 50px; bottom: 0; height: 3px; background: #147a41; }
.add { margin-left: auto; width: 34px; height: 30px; color: #555; }
.hscroll { width: 62px; height: 10px; margin: 10px 0 0 50px; border-radius: 5px; background: #bcbcbc; }

.status { display: flex; align-items: center; height: 31px; padding: 0 14px 0 15px; color: #666; flex: none; }
.view { width: 33px; height: 25px; border-radius: 4px; margin-right: 7px; }
.view.on { margin-left: auto; }
.zoom { width: 22px; height: 24px; color: #555; }
.out { margin: 0 9px 0 12px; }
.slider { appearance: none; width: 125px; height: 10px; margin: 0 8px 0 0; border-radius: 4px; background: #e6e6e6; }
.slider::-webkit-slider-thumb { appearance: none; width: 17px; height: 22px; border: 1px solid #222; border-radius: 3px; background: #e6e6e6; }
.pct { margin-left: 10px; min-width: 31px; }
```
